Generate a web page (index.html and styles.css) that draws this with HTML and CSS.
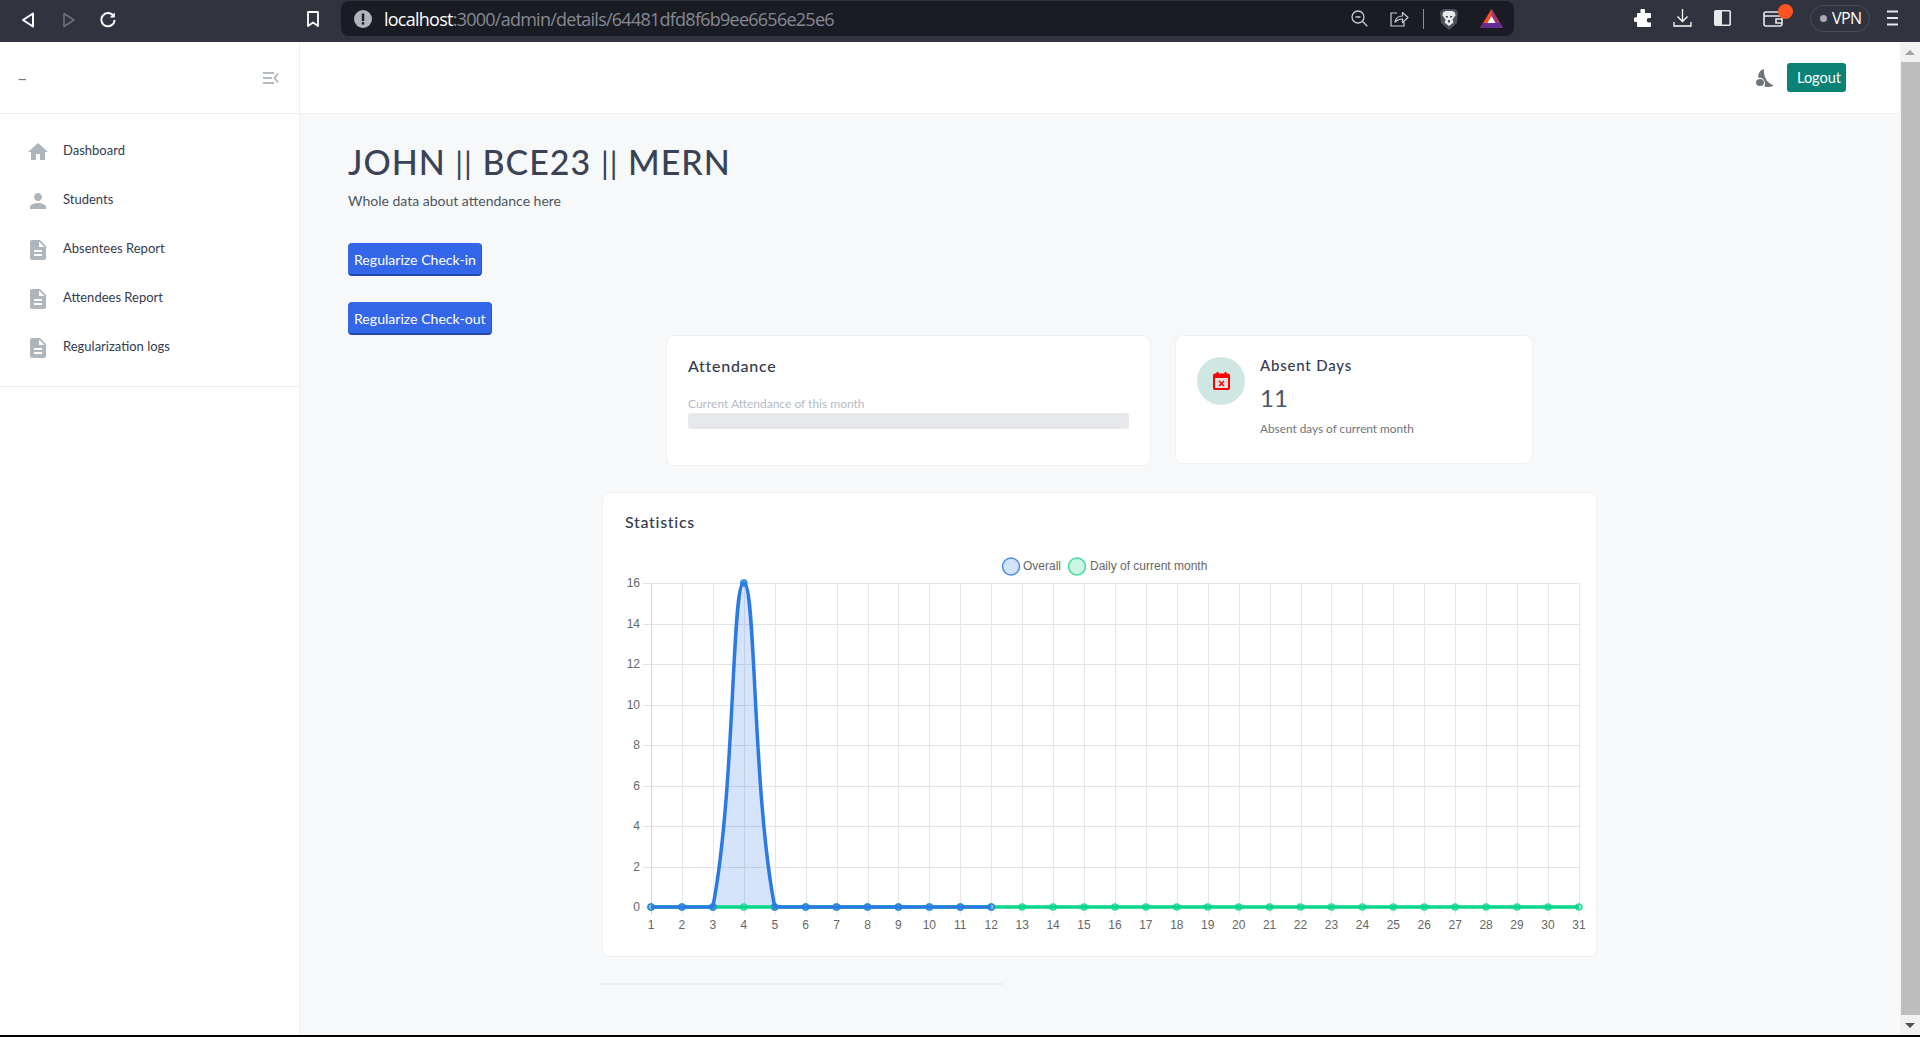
FILE: index.html
```html
<!DOCTYPE html>
<html lang="en">
<head>
    <meta charset="UTF-8">
    <meta name="viewport" content="width=device-width, initial-scale=1.0">
    <title>Admin - Attendance details</title>
    <link rel="stylesheet" href="styles.css">
</head>
<body>
    <div class="browser-bar">
        <div class="nav-buttons">
            <svg class="tb-icon back" viewBox="0 0 14 16"><path d="M12 1.500 2 8l10 6.500z" fill="none" stroke="#fff" stroke-width="2" stroke-linejoin="round"/></svg>
            <svg class="tb-icon forward" viewBox="0 0 14 16"><path d="M2 1.500 12 8 2 14.500z" fill="none" stroke="#6b6e79" stroke-width="1.600" stroke-linejoin="round"/></svg>
            <svg class="tb-icon reload" viewBox="0 0 18 18"><path d="M14.500 5A6.600 6.600 0 1 0 15.600 9" fill="none" stroke="#fff" stroke-width="2"/><path d="M15.800 1.500v5h-5z" fill="#fff"/></svg>
        </div>
        <svg class="tb-icon bookmark" viewBox="0 0 14 16"><path d="M2 1h10v14l-5-3.600L2 15z" fill="none" stroke="#fff" stroke-width="1.800" stroke-linejoin="round"/></svg>
        <div class="url-box">
            <svg class="tb-icon info" viewBox="0 0 18 18"><circle cx="9" cy="9" r="9" fill="#b1b4ba"/><rect x="7.800" y="3.500" width="2.400" height="7.500" fill="#1a1c23"/><rect x="7.800" y="12.200" width="2.400" height="2.400" fill="#1a1c23"/></svg>
            <span class="url-text"><b>localhost</b>:3000/admin/details/64481dfd8f6b9ee6656e25e6</span>
            <div class="url-actions">
                <svg class="tb-icon zoom-out" viewBox="0 0 17 17"><circle cx="7" cy="7" r="6" fill="none" stroke="#c9cbd0" stroke-width="1.300"/><path d="M4.500 7h5M11.300 11.300l5 5" stroke="#c9cbd0" stroke-width="1.300"/></svg>
                <svg class="tb-icon share" viewBox="0 0 19 17"><path d="M7 3H1v13h13v-4" fill="none" stroke="#c9cbd0" stroke-width="1.200"/><path d="M5 12c.6-4 3.500-6 7.500-6V2.500L18 7.500l-5.500 5V9C9 9 7 10 5 12z" fill="none" stroke="#c9cbd0" stroke-width="1.200" stroke-linejoin="round"/></svg>
                <span class="url-divider"></span>
                <svg class="tb-icon brave" viewBox="0 0 20 22"><path d="M4 1h12l3 3-1 11-8 7-8-7L1 4z" fill="#4c5058"/><path d="M4 4.500 6.500 3h7L16 4.500l.5 3-3 4 1 3L10 18l-4.500-3.500 1-3-3-4z" fill="#e9eaec"/><path d="M6.500 8h2.500v1.500H7zM11 8h2.500l-.5 1.500h-2zM9 12h2v2.500H9z" fill="#4c5058"/></svg>
                <svg class="tb-icon bat" viewBox="0 0 23 19"><path d="M11.500 0 23 19H0z" fill="#ff4f1f"/><path d="M11.500 0 23 19H11.500z" fill="#a02f7c"/><path d="M0 19h23l-3-5H3z" fill="#662d91"/><path d="M11.500 7l4 7h-8z" fill="#fff"/></svg>
            </div>
        </div>
        <div class="bar-actions">
            <svg class="tb-icon puzzle" viewBox="0 0 18 18"><path d="M7 0h3a1.500 1.500 0 0 1 1 2v2h5a1 1 0 0 1 1 1v4h-2a2.300 2.300 0 0 0 0 4.600h2V17a1 1 0 0 1-1 1H4a1 1 0 0 1-1-1v-4H2a2.400 2.400 0 0 1 0-4.800h1V5a1 1 0 0 1 1-1h2.500V2A1.700 1.700 0 0 1 7 0z" fill="#fff"/></svg>
            <svg class="tb-icon download" viewBox="0 0 19 18"><path d="M9.500 0v12M4.500 7.500l5 5 5-5M1 13v4h17v-4" fill="none" stroke="#fff" stroke-width="1.300"/></svg>
            <svg class="tb-icon side-panel" viewBox="0 0 17 16"><rect x="1" y="1" width="7" height="14" fill="#e8e8ea"/><rect x=".8" y=".8" width="15.400" height="14.400" rx="1" fill="none" stroke="#e8e8ea" stroke-width="1.600"/></svg>
            <div class="wallet">
                <svg class="tb-icon" viewBox="0 0 20 16"><rect x="1" y="1" width="18" height="14" rx="2" fill="none" stroke="#e8e8ea" stroke-width="1.600"/><path d="M1 5h18M19 8h-6v4h6" fill="none" stroke="#e8e8ea" stroke-width="1.600"/></svg>
                <span class="wallet-dot"></span>
            </div>
            <div class="vpn-pill"><span class="vpn-dot"></span>VPN</div>
            <svg class="tb-icon menu" viewBox="0 0 11 16"><path d="M0 1.500h11M0 8h11M0 14.500h11" stroke="#e8e8ea" stroke-width="1.800"/></svg>
        </div>
    </div>

    <div class="app">
        <aside class="sidebar">
            <div class="sidebar-head">
                <span class="brand">–</span>
                <svg class="toggle" viewBox="0 0 16 12"><path d="M0 1h11M0 6h9M0 11h11" stroke="#b3bac1" stroke-width="2"/><path d="M15 1.500 11.500 6l3.500 4.500" fill="none" stroke="#b3bac1" stroke-width="2"/></svg>
            </div>
            <nav class="side-nav">
                <a class="nav-item"><svg viewBox="0 0 24 24"><path d="M10 20v-6h4v6h5v-8h3L12 3 2 12h3v8z"/></svg>Dashboard</a>
                <a class="nav-item"><svg viewBox="0 0 24 24"><path d="M12 12c2.210 0 4-1.790 4-4s-1.790-4-4-4-4 1.790-4 4 1.790 4 4 4zm0 2c-2.670 0-8 1.340-8 4v2h16v-2c0-2.660-5.330-4-8-4z"/></svg>Students</a>
                <a class="nav-item"><svg viewBox="0 0 24 24"><path d="M14 2H6c-1.100 0-1.990.9-1.990 2L4 20c0 1.100.89 2 1.990 2H18c1.100 0 2-.9 2-2V8l-6-6zm2 16H8v-2h8v2zm0-4H8v-2h8v2zm-3-5V3.500L18.500 9H13z"/></svg>Absentees Report</a>
                <a class="nav-item"><svg viewBox="0 0 24 24"><path d="M14 2H6c-1.100 0-1.990.9-1.990 2L4 20c0 1.100.89 2 1.990 2H18c1.100 0 2-.9 2-2V8l-6-6zm2 16H8v-2h8v2zm0-4H8v-2h8v2zm-3-5V3.500L18.500 9H13z"/></svg>Attendees Report</a>
                <a class="nav-item"><svg viewBox="0 0 24 24"><path d="M14 2H6c-1.100 0-1.990.9-1.990 2L4 20c0 1.100.89 2 1.990 2H18c1.100 0 2-.9 2-2V8l-6-6zm2 16H8v-2h8v2zm0-4H8v-2h8v2zm-3-5V3.500L18.500 9H13z"/></svg>Regularization logs</a>
            </nav>
        </aside>

        <div class="main">
            <header class="topbar">
                <svg class="moon" viewBox="0 0 18 18"><path d="M8 0C4 1 1.500 5 2.500 9 6 8 9 11 9 15c0 1-.5 2-1 2.500 4 1 7 .5 10-1C12 15 7 8 8 0z" fill="#6c757d"/><ellipse cx="4" cy="13.500" rx="4" ry="3.500" fill="#6c757d"/></svg>
                <button class="logout-btn">Logout</button>
            </header>
            <main class="content">
                <h1>JOHN <span class="pipes">||</span> BCE23 <span class="pipes">||</span> MERN</h1>
                <p class="subtitle">Whole data about attendance here</p>
                <div class="actions">
                    <button class="reg-btn">Regularize Check-in</button>
                    <button class="reg-btn">Regularize Check-out</button>
                </div>
                <div class="cards">
                    <section class="card attendance-card">
                        <h3>Attendance</h3>
                        <div class="progress-label">Current Attendance of this month</div>
                        <div class="progress"></div>
                    </section>
                    <section class="card absent-card">
                        <div class="absent-icon">
                            <svg viewBox="0 0 17 18"><rect x="1" y="2.500" width="15" height="14.500" rx="1" fill="#e2e2e0" stroke="#f00" stroke-width="2"/><rect x="1" y="2" width="15" height="4" fill="#f00"/><path d="M3.500 0h2v3h-2zM11.500 0h2v3h-2z" fill="#f00"/><path d="M6 9l5 5M11 9l-5 5" stroke="#f00" stroke-width="1.500"/></svg>
                        </div>
                        <div class="absent-body">
                            <h4>Absent Days</h4>
                            <div class="absent-count">11</div>
                            <p>Absent days of current month</p>
                        </div>
                    </section>
                </div>
                <section class="card stats-card">
                    <h3>Statistics</h3>
                    <div id="chart"></div>
                </section>
                <div class="content-rule"></div>
            </main>
        </div>

        <div class="scrollbar">
            <span class="arrow arrow-up"></span>
            <span class="thumb"></span>
            <span class="arrow arrow-down"></span>
        </div>
    </div>
    <script src="chart.js"></script>
</body>
</html>
```
FILE: styles.css
```css
* {
    margin: 0;
    padding: 0;
    box-sizing: border-box;
}

html, body {
    height: 100%;
    overflow: hidden;
}

body {
    font-family: Lato, 'Liberation Sans', sans-serif;
    background: #000;
    display: flex;
    flex-direction: column;
    height: 1037px;
    padding-bottom: 2px;
}

/* browser chrome */
.browser-bar {
    height: 42px;
    flex: none;
    background: #31343f;
    display: flex;
    align-items: flex-start;
    color: #fff;
}

.tb-icon {
    display: block;
    flex: none;
}

.nav-buttons {
    width: 306px;
    padding: 11px 0 0 21px;
    display: flex;
    align-items: center;
}

.back { width: 14px; height: 16px; margin-right: 27px; }
.forward { width: 14px; height: 16px; margin-right: 23px; }
.reload { width: 18px; height: 18px; }
.bookmark { width: 14px; height: 16px; margin: 11px 21px 0 0; }

.url-box {
    width: 1173px;
    height: 35px;
    margin-top: 1px;
    background: #1a1c23;
    border-radius: 8px;
    display: flex;
    align-items: center;
    padding-left: 13px;
}

.info { width: 18px; height: 18px; margin-right: 12px; }

.url-text {
    font-family: 'Open Sans', sans-serif;
    font-size: 18px;
    letter-spacing: -0.75px;
    color: #858993;
}

.url-text b {
    font-weight: 400;
    color: #fff;
}

.url-actions {
    margin-left: auto;
    display: flex;
    align-items: center;
    padding-right: 11px;
}

.zoom-out { width: 17px; height: 17px; margin-right: 22px; }
.share { width: 19px; height: 17px; margin-right: 14px; }
.url-divider { width: 1px; height: 20px; background: #8b8e96; margin-right: 15px; }
.brave { width: 20px; height: 22px; margin-right: 21px; }
.bat { width: 23px; height: 19px; }

.bar-actions {
    flex: 1;
    display: flex;
    align-items: center;
    height: 36px;
    padding-left: 120px;
}

.puzzle { width: 18px; height: 18px; margin-right: 21px; }
.download { width: 19px; height: 18px; margin-right: 22px; }
.side-panel { width: 17px; height: 16px; margin-right: 32px; }

.wallet {
    position: relative;
    width: 20px;
    margin-right: 27px;
    padding-top: 2px;
}

.wallet-dot {
    position: absolute;
    left: 15px;
    top: -5px;
    width: 15px;
    height: 15px;
    border-radius: 50%;
    background: #ff5322;
}

.vpn-pill {
    width: 60px;
    height: 27px;
    border: 1.5px solid #4a4d5b;
    border-radius: 14px;
    display: flex;
    align-items: center;
    padding-left: 9px;
    font-family: 'Open Sans', sans-serif;
    font-size: 16px;
    letter-spacing: -0.6px;
    margin-right: 17px;
}

.vpn-dot {
    width: 7px;
    height: 7px;
    border-radius: 50%;
    background: #a7aab2;
    margin-right: 5px;
    flex: none;
}

.menu { width: 11px; height: 16px; }

/* app */
.app {
    flex: 1;
    min-height: 0;
    display: flex;
    background: #f7f8fa;
}

.sidebar {
    width: 300px;
    flex: none;
    background: #fff;
    border-right: 1px solid #eceef0;
}

.sidebar-head {
    height: 71px;
    padding: 0 20px 0 17px;
    display: flex;
    align-items: center;
    justify-content: space-between;
}

.brand {
    font-size: 18px;
    color: #777;
}

.toggle {
    width: 16px;
    height: 12px;
}

.side-nav {
    border-top: 1px solid #eceef0;
    border-bottom: 1px solid #eceef0;
    padding: 11px 0 16px;
}

.nav-item {
    height: 49px;
    display: flex;
    align-items: center;
    padding-left: 26px;
    font-size: 13px;
    color: #343b4e;
}

.nav-item svg {
    width: 24px;
    height: 24px;
    fill: #adb5bd;
    margin: 4px 13px 0 0;
}

.main {
    flex: 1;
    min-width: 0;
    display: flex;
    flex-direction: column;
}

.topbar {
    height: 72px;
    flex: none;
    background: #fff;
    border-bottom: 1px solid #f0f1f3;
    display: flex;
    align-items: center;
    justify-content: flex-end;
    padding-right: 54px;
}

.moon {
    width: 18px;
    height: 18px;
    margin-right: 13px;
}

.logout-btn {
    width: 59px;
    height: 29px;
    background: #0a8376;
    color: #fff;
    border: none;
    border-radius: 3px;
    font-family: Lato, sans-serif;
    font-size: 14.500px;
    text-align: right;
    padding-right: 5px;
}

.content {
    padding: 26px 48px 0;
}

h1 {
    font-size: 34px;
    font-weight: 500;
    letter-spacing: 1px;
    line-height: 44px;
    color: #3a4256;
}

.pipes {
    font-size: 31px;
    font-weight: 400;
    letter-spacing: 1px;
    line-height: 0;
}

.subtitle {
    font-size: 14px;
    line-height: 18px;
    margin-top: 8px;
    color: #4d5560;
}

.actions {
    margin-top: 33px;
    display: flex;
    flex-direction: column;
    align-items: flex-start;
    gap: 26px;
}

.reg-btn {
    height: 33px;
    padding: 0 5px;
    background: #3366e8;
    border: 1px solid #3366e8;
    border-bottom: 2px solid #2447ab;
    border-right: 1px solid #2a52c4;
    border-radius: 4px;
    color: #fff;
    font-family: Lato, sans-serif;
    font-size: 14.100px;
}

.card {
    background: #fff;
    border: 1px solid #eef0f2;
    border-radius: 8px;
}

.cards {
    display: flex;
    align-items: flex-start;
    gap: 24px;
    margin-left: 318px;
}

.card h3 {
    font-size: 16px;
    font-weight: 500;
    letter-spacing: 0.700px;
    color: #343b4e;
}

.attendance-card {
    width: 485px;
    height: 131px;
    padding: 20px 21px;
}

.progress-label {
    font-size: 12px;
    color: #b5bac4;
    margin-top: 21px;
    line-height: 15px;
}

.progress {
    height: 16px;
    margin-top: 2px;
    background: #e6e8eb;
    border-radius: 3px;
}

.absent-card {
    width: 358px;
    height: 129px;
    padding: 19px 21px;
    display: flex;
}

.absent-icon {
    width: 48px;
    height: 48px;
    flex: none;
    border-radius: 50%;
    background: #cfe7e3;
    display: flex;
    align-items: center;
    justify-content: center;
    margin: 2px 15px 0 0;
}

.absent-icon svg {
    width: 17px;
    height: 18px;
}

.absent-body h4 {
    font-size: 15px;
    font-weight: 500;
    letter-spacing: 0.800px;
    line-height: 20px;
    color: #343b4e;
}

.absent-count {
    font-size: 24px;
    line-height: 30px;
    margin-top: 8px;
    color: #4a5468;
}

.absent-body p {
    font-size: 11.800px;
    line-height: 15px;
    margin-top: 8px;
    color: #6c757d;
}

.stats-card {
    width: 995px;
    height: 465px;
    margin: 26px 0 0 254px;
    padding: 19px 0 0 22px;
}

.stats-card h3 {
    line-height: 20px;
}

#chart {
    margin-top: 21px;
}

#chart svg {
    display: block;
}

.content-rule {
    width: 401px;
    height: 1.500px;
    background: #eceef0;
    margin: 26px 0 0 254px;
}

/* scrollbar */
.scrollbar {
    width: 20px;
    flex: none;
    background: #f1f1f1;
    display: flex;
    flex-direction: column;
}

.thumb {
    flex: 1;
    margin-left: 1px;
    background: #bdbdbd;
}

.arrow {
    height: 20px;
    flex: none;
    display: flex;
    align-items: center;
    justify-content: center;
}

.arrow::before {
    content: '';
    border-left: 5px solid transparent;
    border-right: 5px solid transparent;
}

.arrow-up::before {
    border-bottom: 5px solid #a3a3a3;
}

.arrow-down::before {
    border-top: 5px solid #505050;
}
```
FILE: chart.js
```js
// draws the attendance line chart, same look as the chart library used on the real page
const overall = [0, 0, 0, 16, 0, 0, 0, 0, 0, 0, 0, 0];
const daily = new Array(31).fill(0);

const W = 960;
const H = 400;
const left = 26;
const top_ = 30;
const stepX = 30.93;
const stepY = 20.25;
const bottom = top_ + 16 * stepY;

const px = i => left + i * stepX;
const py = v => bottom - v * stepY;

function linePath(data) {
    let d = `M${px(0)} ${py(data[0])}`;
    for (let i = 1; i < data.length; i++) {
        if (data[i] === 0 && data[i - 1] === 0) {
            d += `L${px(i)} ${py(0)}`;
        } else if (data[i] > data[i - 1]) {
            // rising side of the peak
            d += `C${px(i - 1) + 22.6} ${py(data[i] * 0.365)} ${px(i) - 12.4} ${py(data[i])} ${px(i)} ${py(data[i])}`;
        } else {
            d += `C${px(i - 1) + 12.4} ${py(data[i - 1])} ${px(i) - 22.6} ${py(data[i - 1] * 0.365)} ${px(i)} ${py(0)}`;
        }
    }
    return d;
}

let out = `<svg width="${W}" height="${H}" viewBox="0 0 ${W} ${H}" font-family="'Liberation Sans', sans-serif" font-size="12" fill="#666">`;

// legend
out += `<circle cx="386" cy="13.5" r="8.5" fill="#d2e2f8" stroke="#4a8be6" stroke-width="1.5"/>`;
out += `<text x="398" y="17">Overall</text>`;
out += `<circle cx="452" cy="13.5" r="8.5" fill="#ccf6e4" stroke="#3ddc9e" stroke-width="1.5"/>`;
out += `<text x="465" y="17">Daily of current month</text>`;

// grid
for (let v = 0; v <= 16; v += 2) {
    const y = Math.round(py(v)) + 0.5;
    out += `<path d="M${left - 8} ${y}H${px(30)}" stroke="#e3e3e3"/>`;
    out += `<text x="${left - 11}" y="${y + 3}" text-anchor="end">${v}</text>`;
}
for (let i = 0; i < 31; i++) {
    const x = Math.round(px(i)) + 0.5;
    out += `<path d="M${x} ${top_}V${bottom + 8}" stroke="${i === 0 ? '#d4d4d4' : '#e6e6e6'}"/>`;
    out += `<text x="${px(i)}" y="${bottom + 22}" text-anchor="middle">${i + 1}</text>`;
}

// points sit under the lines, the overall series is on top of the daily one
out += `<path d="${linePath(overall)}V${bottom}H${px(0)}Z" fill="#2b7ae4" fill-opacity="0.2"/>`;
daily.forEach((v, i) => {
    out += `<circle cx="${px(i)}" cy="${py(v)}" r="3" fill="#9ceec9" stroke="#2fdc9c" stroke-width="1.5"/>`;
});
out += `<path d="${linePath(daily)}" fill="none" stroke="#05d68a" stroke-width="3.5"/>`;
overall.forEach((v, i) => {
    out += `<circle cx="${px(i)}" cy="${py(v)}" r="3" fill="#8cbdf0" stroke="#2b8ad8" stroke-width="1.5"/>`;
});
out += `<path d="${linePath(overall)}" fill="none" stroke="#2b7ae4" stroke-width="3.5"/>`;

out += '</svg>';
document.getElementById('chart').innerHTML = out;
```
